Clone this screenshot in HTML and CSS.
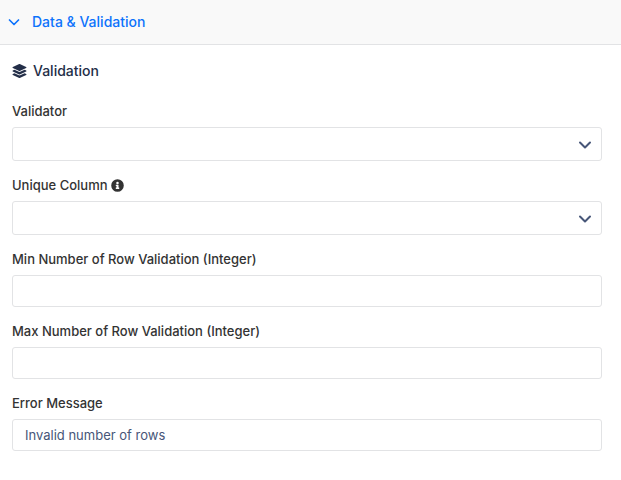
FILE: index.html
```html
<!DOCTYPE html>
<html lang="en">
  <head>
    <meta charset="UTF-8" />
    <meta name="viewport" content="width=device-width, initial-scale=1.0" />
    <title>Data &amp; Validation</title>
    <link rel="stylesheet" href="styles.css">
  </head>
  <body>
    <button type="button" class="section-toggle" aria-expanded="true" aria-controls="validation">
      <svg class="toggle-icon" viewBox="0 0 12 12" aria-hidden="true">
        <path d="M1.500 4 6 8.500 10.500 4" />
      </svg>
      Data &amp; Validation
    </button>
    <form class="panel" id="validation" autocomplete="off">
      <h2 class="panel-title">
        <svg class="layers-icon" viewBox="0 0 512 512" aria-hidden="true">
          <path d="M12.4 148 244.500 253.300c6.800 3.100 14.900 3.100 21.500 0L498.200 148c16.500-7.400 16.500-32.400 0-39.900L266.100 2.900c-6.800-3.100-14.900-3.100-21.500 0L12.400 108.100c-16.500 7.500-16.500 32.500 0 39.900zm487.200 88.300-57.900-26.200-161.800 73.300c-7.600 3.400-15.600 5.200-23.900 5.200s-16.300-1.800-23.900-5.200L70.300 210.100l-57.900 26.200c-16.500 7.500-16.500 32.500 0 40l232.100 105.100c6.800 3.100 14.900 3.100 21.500 0L499.600 276.300c16.500-7.500 16.500-32.500 0-40zm0 127.800-57.700-26.100-162 73.400c-7.600 3.400-15.600 5.200-23.900 5.200s-16.300-1.800-23.900-5.200L70.100 338l-57.700 26.100c-16.500 7.500-16.500 32.500 0 40l232.100 105.100c6.800 3.100 14.900 3.100 21.500 0L499.600 404.100c16.500-7.500 16.500-32.500 0-40z" />
        </svg>
        Validation
      </h2>
      <div class="field">
        <label for="validator">Validator</label>
        <div class="select-wrap">
          <select id="validator" name="validator">
            <option value=""></option>
          </select>
          <svg class="arrow" viewBox="0 0 14 14" aria-hidden="true">
            <path d="M2 5.500 7 10.500l5-5" />
          </svg>
        </div>
      </div>
      <div class="field">
        <label for="uniqueColumn">
          Unique Column
          <svg class="info-icon" viewBox="0 0 512 512" aria-hidden="true">
            <path d="M256 8a248 248 0 1 0 0 496 248 248 0 0 0 0-496zm0 96a50 50 0 1 1 0 100 50 50 0 0 1 0-100zm68 276c0 6.600-5.400 12-12 12H200c-6.600 0-12-5.400-12-12v-32c0-6.600 5.400-12 12-12h16v-56h-16c-6.600 0-12-5.400-12-12v-32c0-6.600 5.400-12 12-12h84c6.600 0 12 5.400 12 12v100h16c6.600 0 12 5.400 12 12v32z" />
          </svg>
        </label>
        <div class="select-wrap">
          <select id="uniqueColumn" name="uniqueColumn">
            <option value=""></option>
          </select>
          <svg class="arrow" viewBox="0 0 14 14" aria-hidden="true">
            <path d="M2 5.500 7 10.500l5-5" />
          </svg>
        </div>
      </div>
      <div class="field">
        <label for="minRow">Min Number of Row Validation (Integer)</label>
        <input type="text" id="minRow" name="minRow" />
      </div>
      <div class="field">
        <label for="maxRow">Max Number of Row Validation (Integer)</label>
        <input type="text" id="maxRow" name="maxRow" />
      </div>
      <div class="field">
        <label for="errorMessage">Error Message</label>
        <input type="text" id="errorMessage" name="errorMessage" value="Invalid number of rows" />
      </div>
    </form>
  </body>
</html>
```
FILE: styles.css
```css
* {
  box-sizing: border-box;
}
body {
  margin: 0;
  background-color: #fff;
  font-family: Inter, "Liberation Sans", sans-serif;
  font-size: 13px;
  line-height: 20px;
  color: #333;
}
.section-toggle {
  display: flex;
  align-items: center;
  gap: 12px;
  width: 100%;
  padding: 12px 8px;
  border: 0;
  border-bottom: 1px solid #e2e3e5;
  background-color: #f9f9f9;
  font-family: inherit;
  font-size: 14px;
  font-weight: 500;
  line-height: 20px;
  color: #0d73fc;
  text-align: left;
  cursor: pointer;
}
.toggle-icon {
  width: 12px;
  height: 12px;
  fill: none;
  stroke: currentColor;
  stroke-width: 1.7;
  stroke-linecap: round;
  stroke-linejoin: round;
}
.panel {
  padding: 16px 19px 16px 12px;
}
.panel-title {
  display: flex;
  align-items: center;
  gap: 6px;
  margin: 0 0 20px;
  font-size: 14px;
  font-weight: 500;
  line-height: 20px;
  color: #232e48;
}
.layers-icon {
  width: 15px;
  height: 14px;
  fill: currentColor;
}
.field {
  margin-bottom: 14px;
}
.field label {
  display: flex;
  align-items: center;
  gap: 3px;
  margin-bottom: 6px;
  font-weight: 500;
}
.info-icon {
  width: 13px;
  height: 13px;
  fill: currentColor;
}
.field input,
.field select {
  display: block;
  width: 100%;
  height: 32px;
  padding: 0 12px;
  border: 1px solid #e2e3e5;
  border-radius: 3px;
  outline: none;
  background-color: #fff;
  font-family: inherit;
  font-size: 13px;
  color: #475678;
}
.field select {
  height: 34px;
  appearance: none;
}
.field input:focus,
.field select:focus {
  border-color: #0d73fc;
}
.select-wrap {
  display: grid;
  align-items: center;
}
.select-wrap select,
.select-wrap .arrow {
  grid-area: 1 / 1;
}
.arrow {
  justify-self: end;
  width: 14px;
  height: 14px;
  margin-right: 10px;
  fill: none;
  stroke: #475678;
  stroke-width: 2;
  stroke-linecap: round;
  stroke-linejoin: round;
  pointer-events: none;
}
```
